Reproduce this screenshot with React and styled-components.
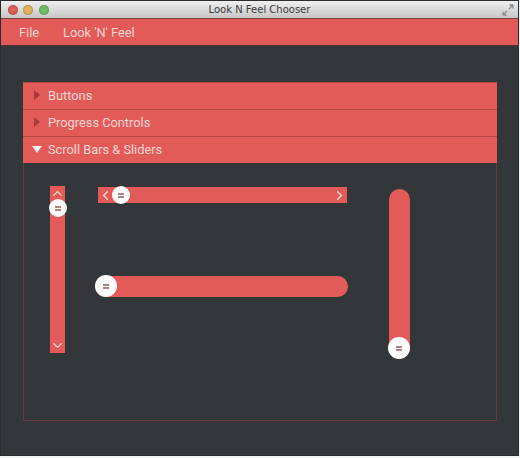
import React from 'react';
import styled, { createGlobalStyle } from 'styled-components';
import { ChevronUp, ChevronDown, ChevronLeft, ChevronRight } from 'lucide-react';

const coral = '#e35b59';

const sections = [
  { title: 'Buttons', open: false },
  { title: 'Progress Controls', open: false },
  { title: 'Scroll Bars & Sliders', open: true },
];

const App = () => (
  <>
    <GlobalStyle />
    <Window>
      <TitleBar>
        <Lights>
          <Light color="#dc5f5c" />
          <Light color="#e4b25a" />
          <Light color="#74bb66" />
        </Lights>
        <WindowTitle>Look N Feel Chooser</WindowTitle>
        <Expand viewBox="0 0 12 12">
          <path d="M1 11 L5 7 M1 11 V7.5 M1 11 H4.5 M11 1 L7 5 M11 1 V4.5 M11 1 H7.5" />
        </Expand>
      </TitleBar>
      <MenuBar>
        <MenuItem>File</MenuItem>
        <MenuItem>Look 'N' Feel</MenuItem>
      </MenuBar>
      <Content>
        <Accordion>
          {sections.map((section) => (
            <Header key={section.title}>
              <Arrow open={section.open} />
              <HeaderLabel>{section.title}</HeaderLabel>
            </Header>
          ))}
          <Panel>
            <ScrollV>
              <ChevronUp size={15} strokeWidth={2} />
              <ChevronDown size={15} strokeWidth={2} />
              <ScrollVThumb><Grip /></ScrollVThumb>
            </ScrollV>
            <MiddleColumn>
              <ScrollH>
                <ChevronLeft size={15} strokeWidth={2} />
                <ChevronRight size={15} strokeWidth={2} />
                <ScrollHThumb><Grip /></ScrollHThumb>
              </ScrollH>
              <SliderH>
                <SliderHThumb><Grip /></SliderHThumb>
              </SliderH>
            </MiddleColumn>
            <SliderV>
              <SliderVThumb><Grip /></SliderVThumb>
            </SliderV>
          </Panel>
        </Accordion>
      </Content>
    </Window>
  </>
);

export default App;

// Styled Components
const GlobalStyle = createGlobalStyle`
  html, body {
    margin: 0;
    padding: 0;
    background: #f2f3f3;
  }
  body {
    width: 520px;
    height: 458px;
    overflow: hidden;
    font-family: Roboto, "Liberation Sans", sans-serif;
  }
`;

const Window = styled.div`
  width: 517px;
  height: 454px;
  margin: 1px 0 0 1px;
  display: flex;
  flex-direction: column;
  background: #33373a;
  box-shadow: 0 0 0 1px #2a2c2e;
`;

const TitleBar = styled.div`
  position: relative;
  height: 17px;
  flex: none;
  display: flex;
  align-items: center;
  justify-content: center;
  background: linear-gradient(#efefef, #c6c6c6);
  border-bottom: 1px solid #7a4444;
`;

const Lights = styled.div`
  position: absolute;
  left: 6.5px;
  top: 4px;
  display: flex;
  gap: 5.6px;
`;

const Light = styled.span`
  width: 10px;
  height: 10px;
  border-radius: 50%;
  background: ${(p) => p.color};
  box-shadow: inset 0 0 2px rgba(0, 0, 0, 0.45);
`;

const WindowTitle = styled.div`
  font-family: "DejaVu Sans", sans-serif;
  font-size: 10px;
  color: #3c3c3c;
`;

const Expand = styled.svg`
  position: absolute;
  right: 4px;
  top: 3px;
  width: 12px;
  height: 12px;
  fill: none;
  stroke: #8b8f92;
  stroke-width: 1.3;
`;

const MenuBar = styled.div`
  height: 27px;
  flex: none;
  display: flex;
  align-items: center;
  gap: 24px;
  padding: 1px 0 0 18px;
  box-sizing: border-box;
  background: ${coral};
  border-bottom: 1px solid #4d3235;
`;

const MenuItem = styled.span`
  font-size: 12.8px;
  color: #f6d6d2;
`;

const Content = styled.div`
  flex: 1;
  padding: 36px 21px 32px 22px;
`;

const Accordion = styled.div`
  display: flex;
  flex-direction: column;
  height: 339px;
`;

const Header = styled.div`
  height: 27px;
  flex: none;
  box-sizing: border-box;
  display: flex;
  align-items: center;
  padding-left: 10px;
  background: ${coral};
  border-top: 1px solid #b84746;
`;

const HeaderLabel = styled.span`
  font-size: 12.8px;
  color: #f6d6d2;
  margin-top: -2px;
`;

const Arrow = styled.span`
  width: 0;
  height: 0;
  margin-top: -2px;
  ${(p) =>
    p.open
      ? `
    margin-left: -1px;
    margin-right: 6px;
    border-left: 5.5px solid transparent;
    border-right: 5.5px solid transparent;
    border-top: 7px solid #fbeeee;
  `
      : `
    margin-left: 1px;
    margin-right: 8px;
    border-top: 5px solid transparent;
    border-bottom: 5px solid transparent;
    border-left: 6px solid #a93a3c;
  `}
`;

const Panel = styled.div`
  flex: 1;
  box-sizing: border-box;
  display: flex;
  align-items: flex-start;
  padding: 23px 0 0 26px;
  border: 1px solid #633c40;
  border-top: none;
`;

const ScrollV = styled.div`
  position: relative;
  width: 15px;
  height: 167px;
  flex: none;
  display: flex;
  flex-direction: column;
  align-items: center;
  justify-content: space-between;
  background: ${coral};
  color: #f9dedc;
`;

const MiddleColumn = styled.div`
  width: 253px;
  flex: none;
  margin-left: 30px;
  padding-top: 1px;
  display: flex;
  flex-direction: column;
  gap: 73px;
`;

const ScrollH = styled.div`
  position: relative;
  width: 249px;
  height: 16px;
  margin-left: 3px;
  display: flex;
  align-items: center;
  justify-content: space-between;
  background: ${coral};
  color: #f9dedc;
`;

const SliderH = styled.div`
  position: relative;
  width: 253px;
  height: 21px;
  border-radius: 11px;
  background: ${coral};
`;

const SliderV = styled.div`
  position: relative;
  width: 21px;
  height: 169px;
  flex: none;
  margin: 3px 0 0 41px;
  border-radius: 11px;
  background: ${coral};
`;

const Thumb = styled.div`
  position: absolute;
  display: flex;
  align-items: center;
  justify-content: center;
  border-radius: 50%;
  background: #fdfdfd;
`;

const ScrollVThumb = styled(Thumb)`
  width: 18px;
  height: 18px;
  left: -1.5px;
  top: 13px;
`;

const ScrollHThumb = styled(Thumb)`
  width: 18px;
  height: 18px;
  left: 14px;
  top: -1px;
`;

const SliderHThumb = styled(Thumb)`
  width: 22px;
  height: 22px;
  left: 0;
  top: -1px;
`;

const SliderVThumb = styled(Thumb)`
  width: 22px;
  height: 22px;
  left: -1px;
  bottom: -1px;
`;

const Grip = styled.span`
  width: 6px;
  height: 1px;
  border-top: 2px solid #ad8386;
  border-bottom: 2px solid #ad8386;
`;
